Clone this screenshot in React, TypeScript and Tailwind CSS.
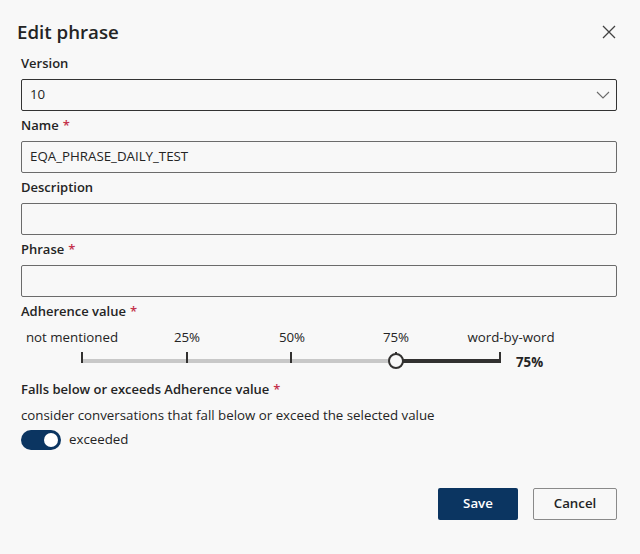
import React, { useState } from 'react';

const font = { fontFamily: '"Open Sans", "Noto Sans", sans-serif' };

function Label({ text, required }: { text: string; required?: boolean }) {
  return (
    <div className="h-5 flex items-center text-[13px] font-semibold text-[#242424]">
      {text}
      {required && <span className="ml-1 text-[#c4314b]">*</span>}
    </div>
  );
}

function TextBox({ value }: { value?: string }) {
  return (
    <div className="h-8 border border-[#6b6b6b] rounded-[2px] bg-[#f8f8f8] flex items-center px-2 text-[13.3px] text-[#242424]">
      {value}
    </div>
  );
}

const ticks = [
  { label: 'not mentioned', pos: 82, labelPos: 72 },
  { label: '25%', pos: 187, labelPos: 187 },
  { label: '50%', pos: 291, labelPos: 292 },
  { label: '75%', pos: 396, labelPos: 396 },
  { label: 'word-by-word', pos: 500, labelPos: 511 },
];

function AdherenceSlider() {
  const value = 396;
  return (
    <div className="relative h-[44px] -ml-[21px] w-[640px]">
      {ticks.map((t) => (
        <span
          key={t.label}
          className="absolute top-0 h-5 leading-5 text-[13.3px] text-[#242424] -translate-x-1/2 whitespace-nowrap"
          style={{ left: t.labelPos }}
        >
          {t.label}
        </span>
      ))}
      <div className="absolute top-[32px] left-[82px] w-[418px] h-[4px] bg-[#c8c8c8]" />
      <div className="absolute top-[32px] h-[4px] bg-[#323130]" style={{ left: value, width: 500 - value }} />
      {ticks.map((t) => (
        <div key={t.pos} className="absolute top-[25px] w-[1.5px] h-[11px] bg-[#323130]" style={{ left: t.pos - 1 }} />
      ))}
      <div
        className="absolute top-[26px] w-4 h-4 rounded-full bg-[#f8f8f8] border-2 border-[#323130]"
        style={{ left: value - 8 }}
      />
      <span className="absolute left-[516px] top-[25px] h-5 leading-5 text-[13.3px] font-bold text-[#242424]">75%</span>
    </div>
  );
}

export default function App() {
  const [on, setOn] = useState(true);
  return (
    <div style={font} className="w-[640px] h-[554px] bg-[#f8f8f8] text-[#242424] relative">
      <div className="flex flex-col pt-[18px] pl-[21px] pr-[23px]">
        <div className="flex items-center justify-between h-7 -ml-1 pr-0">
          <h1 className="text-[18.7px] font-semibold leading-7">Edit phrase</h1>
          <button className="w-5 h-5 flex items-center justify-center text-[#424242] -mr-0.5">
            <svg width="14" height="14" viewBox="0 0 14 14" fill="none" stroke="currentColor" strokeWidth="1.3">
              <path d="M1 1l12 12M13 1L1 13" />
            </svg>
          </button>
        </div>

        <div className="mt-2 flex flex-col">
          <Label text="Version" />
          <div className="mt-[5px] h-8 border border-[#333] rounded-[2px] flex items-center justify-between pl-2 pr-1.5 text-[13.3px]">
            <span>10</span>
            <svg width="14" height="8" viewBox="0 0 14 8" fill="none" stroke="#6b6b6b" strokeWidth="1.1">
              <path d="M1 1l6 6 6-6" />
            </svg>
          </div>
        </div>

        <div className="mt-[5px] flex flex-col gap-[5px]">
          <Label text="Name" required />
          <TextBox value="EQA_PHRASE_DAILY_TEST" />
        </div>
        <div className="mt-[5px] flex flex-col gap-[5px]">
          <Label text="Description" />
          <TextBox />
        </div>
        <div className="mt-[5px] flex flex-col gap-[5px]">
          <Label text="Phrase" required />
          <TextBox />
        </div>

        <div className="mt-[5px] flex flex-col gap-[5px]">
          <Label text="Adherence value" required />
          <AdherenceSlider />
        </div>

        <div className="mt-[9px] flex flex-col gap-[5px]">
          <Label text="Falls below or exceeds Adherence value" required />
          <div className="h-5 leading-5 text-[13.3px]">consider conversations that fall below or exceed the selected value</div>
          <div className="flex items-center gap-2 h-5">
            <button
              onClick={() => setOn(!on)}
              className={`w-10 h-5 rounded-full flex items-center px-[3px] ${on ? 'bg-[#0b3561] justify-end' : 'bg-white border border-[#616161] justify-start'}`}
            >
              <span className={`w-[14px] h-[14px] rounded-full ${on ? 'bg-white' : 'bg-[#616161]'}`} />
            </button>
            <span className="text-[13.3px]">exceeded</span>
          </div>
        </div>

        <div className="mt-[38px] flex justify-end gap-[15px]">
          <button className="w-20 h-8 rounded-[2px] bg-[#0b3561] text-white text-[13.3px] font-semibold">Save</button>
          <button className="w-[84px] h-8 rounded-[2px] border border-[#8a8a8a] bg-[#f8f8f8] text-[13.3px] font-semibold text-[#242424]">Cancel</button>
        </div>
      </div>
    </div>
  );
}
